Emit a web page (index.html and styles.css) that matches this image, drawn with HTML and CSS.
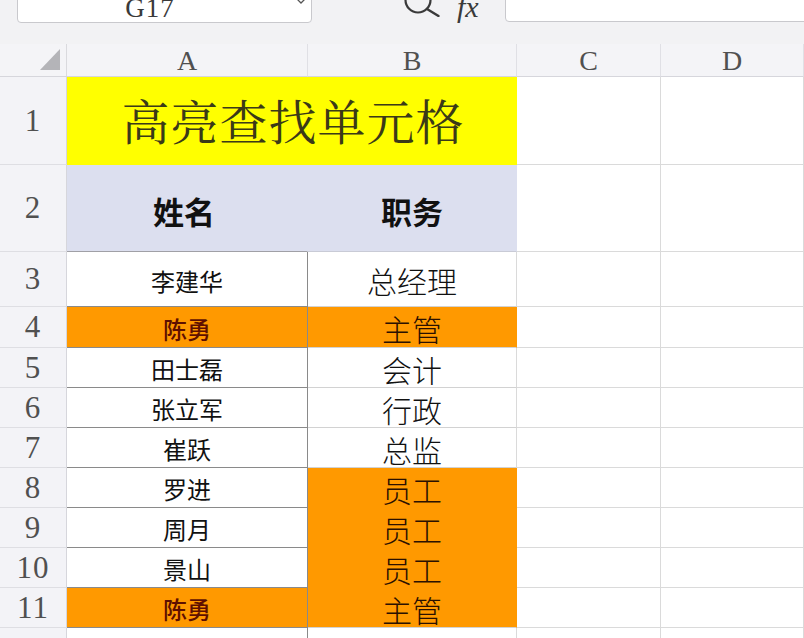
FILE: index.html
```html
<!DOCTYPE html>
<html lang="zh">
<head>
<meta charset="utf-8">
<title>高亮查找单元格</title>
<link rel="stylesheet" href="styles.css">
</head>
<body>
<div class="app">
  <div class="toolbar">
    <div class="namebox">
      <span class="nb-text">G17</span>
      <svg class="nb-arrow" width="10" height="6" viewBox="0 0 10 6"><path d="M1 1 L5 5 L9 1" fill="none" stroke="#555" stroke-width="1.3"/></svg>
    </div>
    <svg class="search" width="38" height="32" viewBox="0 0 38 32"><circle cx="15" cy="15" r="12.5" fill="none" stroke="#3a3a3a" stroke-width="2.2"/><path d="M24 24 L35.5 31" stroke="#3a3a3a" stroke-width="2.4" stroke-linecap="round"/></svg>
    <span class="fx">fx</span>
    <div class="formula"></div>
  </div>

  <div class="sheet">
    <div class="corner"><svg width="20" height="21" viewBox="0 0 20 21"><polygon points="20,0 20,21 0,21" fill="#b4b4b8"/></svg></div>
    <div class="colhead">A</div>
    <div class="colhead">B</div>
    <div class="colhead">C</div>
    <div class="colhead">D</div>

    <div class="rowhead">1</div>
    <div class="cell title">高亮查找单元格</div>
    <div class="cell"></div>
    <div class="cell"></div>

    <div class="rowhead">2</div>
    <div class="cell hdr hdr-a">姓名</div>
    <div class="cell hdr">职务</div>
    <div class="cell"></div>
    <div class="cell"></div>

    <div class="rowhead">3</div>
    <div class="cell name">李建华</div>
    <div class="cell role">总经理</div>
    <div class="cell"></div>
    <div class="cell"></div>

    <div class="rowhead">4</div>
    <div class="cell name hl">陈勇</div>
    <div class="cell role hl">主管</div>
    <div class="cell"></div>
    <div class="cell"></div>

    <div class="rowhead">5</div>
    <div class="cell name">田士磊</div>
    <div class="cell role">会计</div>
    <div class="cell"></div>
    <div class="cell"></div>

    <div class="rowhead">6</div>
    <div class="cell name">张立军</div>
    <div class="cell role">行政</div>
    <div class="cell"></div>
    <div class="cell"></div>

    <div class="rowhead">7</div>
    <div class="cell name">崔跃</div>
    <div class="cell role">总监</div>
    <div class="cell"></div>
    <div class="cell"></div>

    <div class="rowhead">8</div>
    <div class="cell name">罗进</div>
    <div class="cell role hl joined">员工</div>
    <div class="cell"></div>
    <div class="cell"></div>

    <div class="rowhead">9</div>
    <div class="cell name">周月</div>
    <div class="cell role hl joined">员工</div>
    <div class="cell"></div>
    <div class="cell"></div>

    <div class="rowhead">10</div>
    <div class="cell name">景山</div>
    <div class="cell role hl joined">员工</div>
    <div class="cell"></div>
    <div class="cell"></div>

    <div class="rowhead">11</div>
    <div class="cell name hl">陈勇</div>
    <div class="cell role hl">主管</div>
    <div class="cell"></div>
    <div class="cell"></div>

    <div class="rowhead"></div>
    <div class="cell name empty"></div>
    <div class="cell"></div>
    <div class="cell"></div>
    <div class="cell"></div>
  </div>
</div>
</body>
</html>
```

FILE: styles.css
```css
* { box-sizing: border-box; }

html, body {
  margin: 0;
  padding: 0;
  background: #ffffff;
}

.app {
  width: 804px;
  height: 638px;
  overflow: hidden;
  font-family: "Noto Sans CJK SC", "Noto Sans", sans-serif;
}

/* ---------- toolbar ---------- */
.toolbar {
  height: 44px;
  background: #f2f2f4;
  display: flex;
  align-items: flex-start;
  overflow: visible;
}

.namebox {
  flex: none;
  margin-top: -13px;
  margin-left: 17px;
  width: 295px;
  height: 36px;
  background: #ffffff;
  border: 1px solid #c9c9cd;
  border-radius: 4px;
  display: flex;
  align-items: flex-start;
}

.nb-text {
  flex: 1;
  text-align: center;
  padding-right: 14px;
  padding-top: 5px;
  font-family: "Liberation Serif", serif;
  font-size: 27px;
  line-height: 30px;
  color: #3a3a3a;
  letter-spacing: 1px;
}

.nb-arrow {
  margin-top: 10px;
  margin-right: 5px;
}

.search {
  flex: none;
  margin-top: -15px;
  margin-left: 91px;
}

.fx {
  flex: none;
  width: 30px;
  margin-top: -8px;
  margin-left: 16px;
  font-family: "Liberation Serif", serif;
  font-style: italic;
  font-size: 30px;
  line-height: 30px;
  color: #3a3a3a;
}

.formula {
  flex: none;
  margin-top: -13px;
  margin-left: 18px;
  width: 320px;
  height: 35px;
  background: #ffffff;
  border: 1px solid #c9c9cd;
  border-radius: 4px;
}

/* ---------- sheet grid ---------- */
.sheet {
  display: grid;
  grid-template-columns: 67px 241px 209px 144px 1fr;
  grid-template-rows: 33px 88px 87px 55px 41px repeat(7, 40px) 40px;
}

.corner {
  background: #f4f4f7;
  border-right: 1px solid #dadade;
  border-bottom: 1px solid #d6d6dc;
  display: flex;
  justify-content: flex-end;
  align-items: flex-end;
  padding: 0 6px 6px 0;
}

.colhead {
  background: #f4f4f7;
  border-right: 1px solid #e0e0e5;
  border-bottom: 1px solid #d6d6dc;
  display: flex;
  justify-content: center;
  align-items: center;
  font-family: "Liberation Serif", serif;
  font-size: 28px;
  color: #505050;
  padding-top: 1px;
}

.rowhead {
  background: #f3f3f7;
  border-right: 1px solid #d6d6dc;
  border-bottom: 1px solid #dedee3;
  display: flex;
  justify-content: center;
  align-items: center;
  font-family: "Liberation Serif", serif;
  font-size: 31px;
  color: #505050;
  letter-spacing: 1px;
}

.cell {
  border-right: 1px solid #dadada;
  border-bottom: 1px solid #dadada;
  display: flex;
  justify-content: center;
  align-items: center;
  color: #111111;
  white-space: nowrap;
}

.title {
  grid-column: span 2;
  background: #ffff00;
  border-color: #ffff00;
  font-family: "Noto Serif CJK SC", "Noto Sans CJK SC", serif;
  font-size: 48px;
  font-weight: 400;
  color: #3b3a18;
  letter-spacing: 1px;
  padding-left: 3px;
  padding-bottom: 2px;
}

.hdr {
  background: #dcdfef;
  border-right-color: #dcdfef;
  border-bottom-color: #c9cbd6;
  font-size: 31px;
  font-weight: 700;
  padding-top: 5px;
}

.hdr-a {
  padding-right: 6px;
  border-bottom-color: #a0a0a6;
}

.name {
  font-size: 24px;
  font-weight: 400;
  border-right-color: #8a8a8a;
  border-bottom-color: #8a8a8a;
  padding-top: 2px;
}

.name.empty {
  border-bottom-color: #dadada;
}

.role {
  font-size: 30px;
  font-weight: 300;
  border-bottom-color: #d2d2d2;
  padding-top: 2px;
}

.hl {
  background: #ff9900;
}

.name.hl {
  color: #5e1000;
  font-weight: 500;
}

.role.hl {
  color: #2a1000;
  border-right-color: #ff9900;
}

.role.joined {
  border-bottom-color: #ff9900;
}
```
